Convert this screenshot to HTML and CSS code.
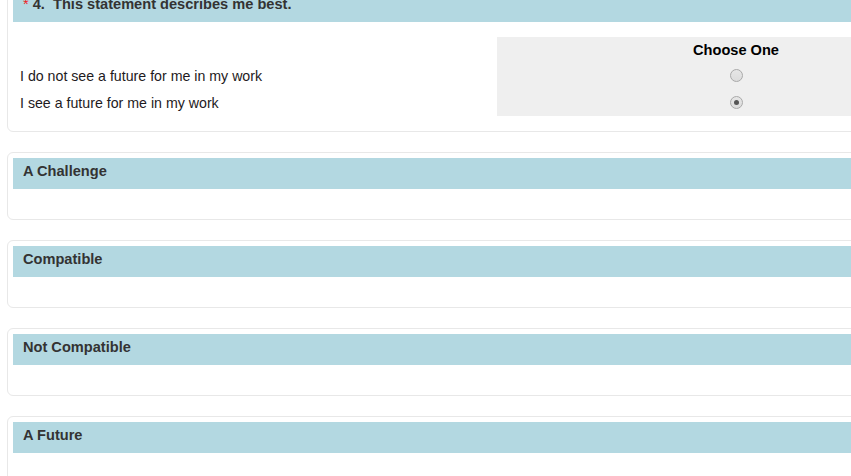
FILE: index.html
```html
<!DOCTYPE html>
<html lang="en">
<head>
    <meta charset="UTF-8">
    <title>Survey</title>
    <link rel="stylesheet" href="styles.css">
</head>
<body>
    <div class="survey">
        <div class="panel panel-first">
            <div class="panel-header"><span class="required">*</span> 4.&nbsp; This statement describes me best.</div>
            <div class="choice-table">
                <div class="cell-label"></div>
                <div class="cell-choice cell-head">Choose One</div>
                <div class="cell-label">I do not see a future for me in my work</div>
                <div class="cell-choice"><input type="radio" name="q4" class="radio"></div>
                <div class="cell-label">I see a future for me in my work</div>
                <div class="cell-choice"><input type="radio" name="q4" class="radio" checked></div>
            </div>
        </div>

        <div class="panel">
            <div class="panel-header">A Challenge</div>
            <div class="panel-body"></div>
        </div>

        <div class="panel">
            <div class="panel-header">Compatible</div>
            <div class="panel-body"></div>
        </div>

        <div class="panel">
            <div class="panel-header">Not Compatible</div>
            <div class="panel-body"></div>
        </div>

        <div class="panel">
            <div class="panel-header">A Future</div>
            <div class="panel-body"></div>
        </div>
    </div>
</body>
</html>
```

FILE: styles.css
```css
body {
    margin: 0;
    font-family: "Liberation Sans", Arial, sans-serif;
    font-size: 14px;
    color: #222;
    background-color: white;
    overflow: hidden;
}
.survey {
    width: 980px;
    padding: 0 0 0 7px;
}
.panel {
    border: 1px solid #e8e8e8;
    border-radius: 6px;
    padding: 5px;
    margin-bottom: 20px;
}
.panel-first {
    margin-top: -15px;
}
.panel-header {
    height: 31px;
    box-sizing: border-box;
    padding: 5px 10px;
    background-color: #b3d8e1;
    color: #333;
    font-weight: bold;
    font-size: 14.6px;
    line-height: 17px;
}
.required {
    color: #e22;
    font-weight: normal;
}
.panel-body {
    height: 25px;
}
.choice-table {
    display: grid;
    grid-template-columns: 483px 478px;
    grid-template-rows: 25px 27px 27px;
    margin: 15px 0 10px 1px;
}
.cell-label {
    display: flex;
    align-items: center;
    padding-left: 6px;
    font-size: 14.2px;
    color: #1e1a22;
}
.cell-choice {
    display: flex;
    align-items: center;
    justify-content: center;
    background-color: #efefef;
}
.cell-head {
    font-weight: bold;
    font-size: 14.6px;
    color: #000;
}
.radio {
    appearance: none;
    width: 13px;
    height: 13px;
    margin: 0;
    border: 1px solid #a9a9a9;
    border-radius: 50%;
    background: linear-gradient(#e6e6e6, #dcdcdc);
    display: flex;
    align-items: center;
    justify-content: center;
}
.radio:checked::after {
    content: "";
    width: 5px;
    height: 5px;
    border-radius: 50%;
    background-color: #555;
}
```
